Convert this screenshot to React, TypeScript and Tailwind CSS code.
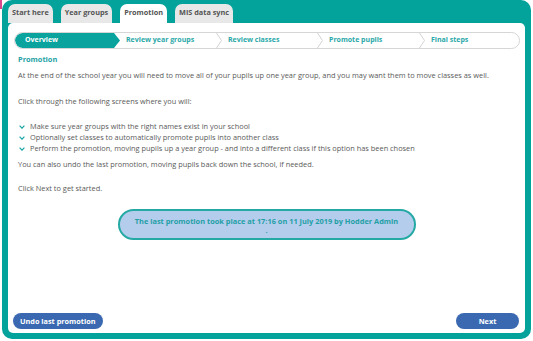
import * as React from 'react'

const tabs = [
  { label: 'Start here', active: false },
  { label: 'Year groups', active: false },
  { label: 'Promotion', active: true },
  { label: 'MIS data sync', active: false },
]

const steps = [
  { label: 'Overview', width: 'w-[105px]' },
  { label: 'Review year groups', width: 'w-[102px]' },
  { label: 'Review classes', width: 'w-[101px]' },
  { label: 'Promote pupils', width: 'w-[102px]' },
  { label: 'Final steps', width: 'flex-1' },
]

const bullets = [
  'Make sure year groups with the right names exist in your school',
  'Optionally set classes to automatically promote pupils into another class',
  'Perform the promotion, moving pupils up a year group - and into a different class if this option has been chosen',
]

function StepChevron() {
  return (
    <svg className="absolute right-0 top-0 h-full w-[6px]" viewBox="0 0 6 15" preserveAspectRatio="none">
      <polyline points="0.5,0 5.5,7.5 0.5,15" fill="none" stroke="#d3d3d3" strokeWidth="1" />
    </svg>
  )
}

function BulletIcon() {
  return (
    <svg width="6" height="4" viewBox="0 0 6 4" className="shrink-0">
      <polyline points="0.6,0.6 3,3.2 5.4,0.6" fill="none" stroke="#1ea6a6" strokeWidth="1.2" />
    </svg>
  )
}

export default function App() {
  return (
    <div className="w-[533px] h-[341px] bg-white flex font-['Open_Sans',sans-serif]">
      <div className="w-[2px] flex flex-col">
        <div className="h-[9px] bg-[#d9468c]" />
      </div>

      <div className="w-[529px] h-[339px] bg-[#03a39c] rounded-[10px] flex flex-col px-[6px] pb-[6px]">
        {/* tabs */}
        <div className="h-[23px] pt-[4px] flex gap-[8px]">
          {tabs.map((tab) => (
            <div
              key={tab.label}
              className={`h-[19px] px-[4px] pt-[3px] rounded-t-[7px] text-[7.3px] leading-[10px] font-bold text-[#555] ${
                tab.active ? 'bg-white' : 'bg-[#e8e8e8]'
              }`}
            >
              {tab.label}
            </div>
          ))}
        </div>

        {/* panel */}
        <div className="flex-1 bg-white rounded-[5px] flex flex-col pt-[9px] pb-[4px]">
          <div className="mx-[6px] mr-[5px] h-[17px] border border-[#d6d6d6] rounded-full flex overflow-hidden">
            {steps.map((step, i) =>
              i === 0 ? (
                <div
                  key={step.label}
                  className={`${step.width} bg-[#0aa39d] rounded-l-full pl-[10px] flex items-center text-[7px] font-bold text-white [clip-path:polygon(0_0,calc(100%-6px)_0,100%_50%,calc(100%-6px)_100%,0_100%)]`}
                >
                  {step.label}
                </div>
              ) : (
                <div
                  key={step.label}
                  className={`${step.width} relative pl-[6px] flex items-center text-[7px] font-bold text-[#2aa8a8]`}
                >
                  {step.label}
                  {i < steps.length - 1 && <StepChevron />}
                </div>
              )
            )}
          </div>

          <div className="pl-[10px] pr-[10px] text-[7.4px] leading-[11px] text-[#5a5a5a]">
            <h2 className="mt-[5px] font-bold text-[#26a2a6]">Promotion</h2>
            <p className="mt-[5px]">
              At the end of the school year you will need to move all of your pupils up one year group, and you may want them to move classes as well.
            </p>
            <p className="mt-[15px]">Click through the following screens where you will:</p>
            <ul className="mt-[14px]">
              {bullets.map((b) => (
                <li key={b} className="flex items-center gap-[5px] pl-[1px]">
                  <BulletIcon />
                  <span>{b}</span>
                </li>
              ))}
            </ul>
            <p className="mt-[5px]">You can also undo the last promotion, moving pupils back down the school, if needed.</p>
            <p className="mt-[13px]">Click Next to get started.</p>
          </div>

          <div className="mt-[15px] flex justify-center">
            <div className="w-[298px] h-[31px] rounded-full border-2 border-[#25a9a5] bg-[#b5cded] flex flex-col items-center pt-[6px] text-[7.4px] leading-[9px] font-bold text-[#1f9fa6]">
              <span>The last promotion took place at 17:16 on 11 July 2019 by Hodder Admin</span>
              <span>.</span>
            </div>
          </div>

          <div className="flex-1" />

          <div className="flex justify-between pl-[5px] pr-[6px]">
            <button className="h-[16px] px-[7px] rounded-full bg-[#3a69b1] text-white text-[7.3px] font-bold">
              Undo last promotion
            </button>
            <button className="h-[16px] w-[63px] rounded-full bg-[#3a69b1] text-white text-[7.3px] font-bold">
              Next
            </button>
          </div>
        </div>
      </div>
    </div>
  )
}
